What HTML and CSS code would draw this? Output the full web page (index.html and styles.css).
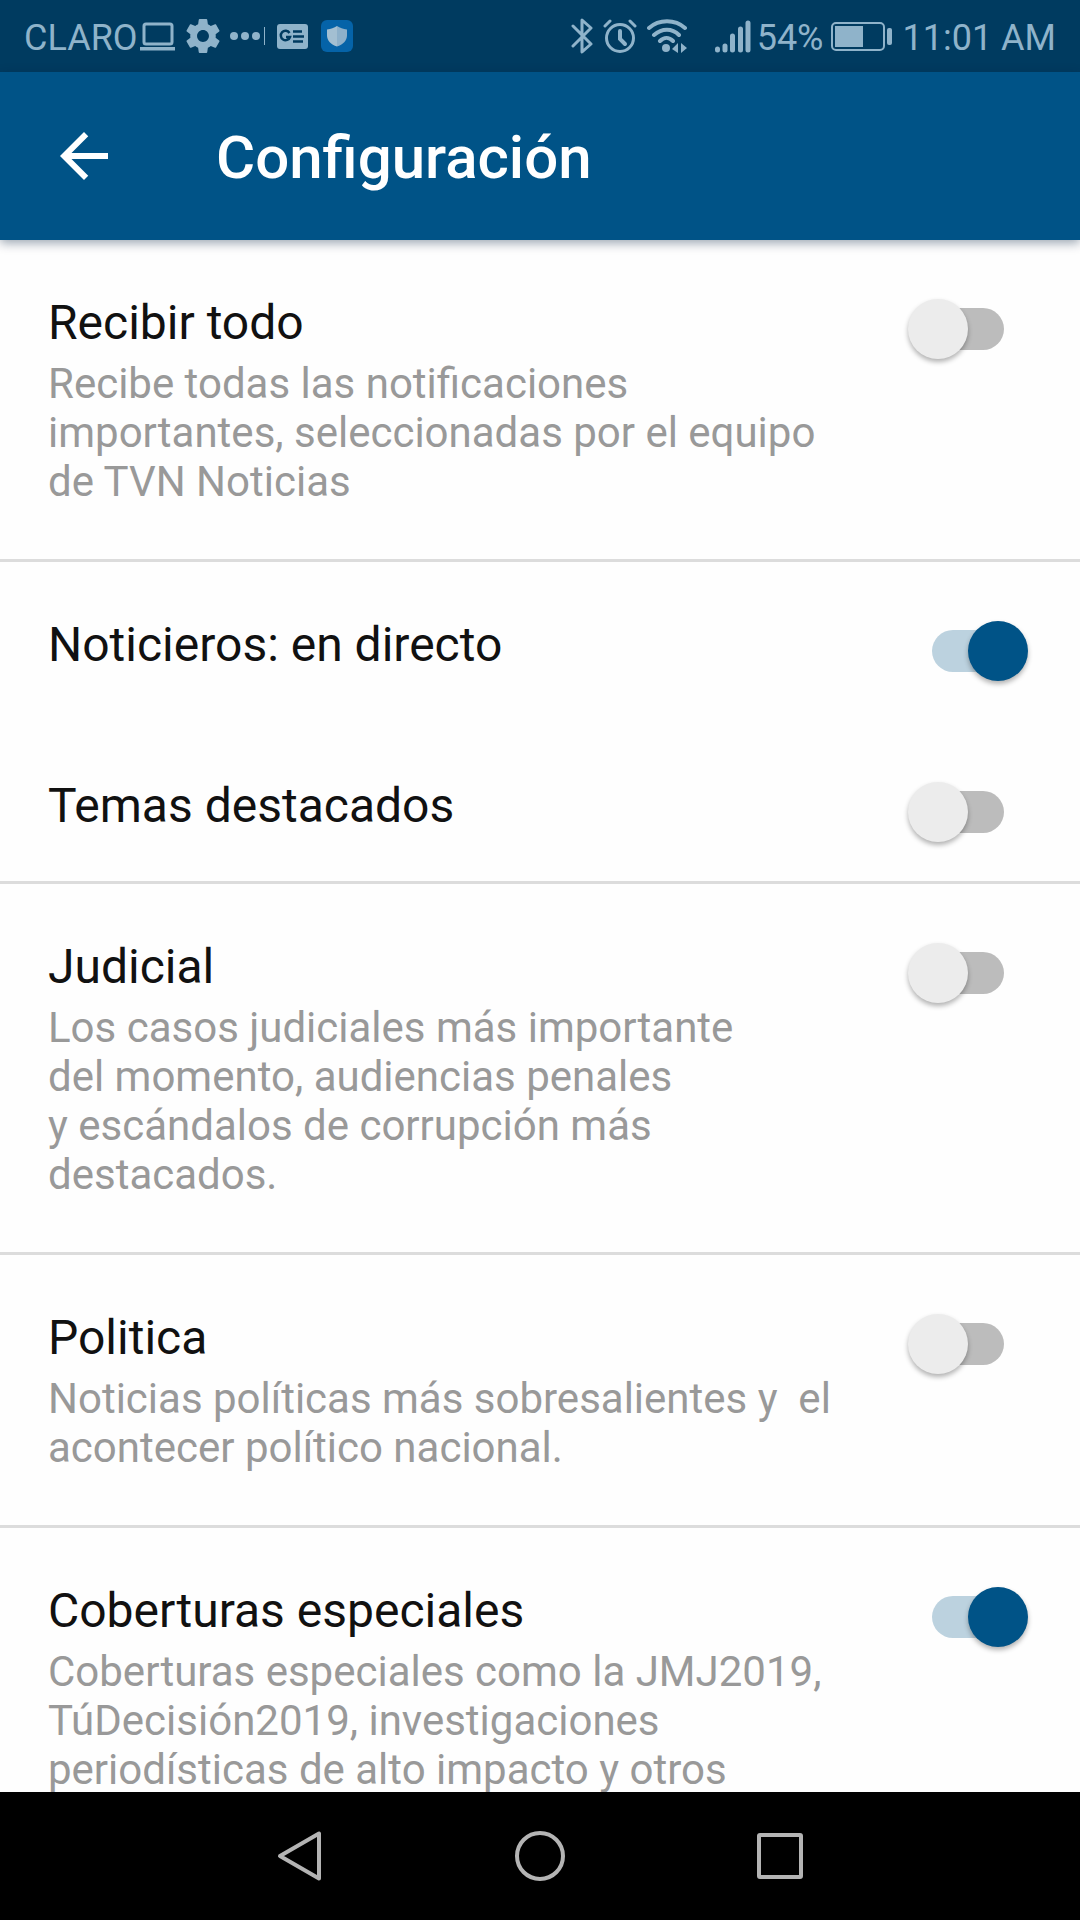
FILE: index.html
```html
<!DOCTYPE html>
<html lang="es">
<head>
<meta charset="utf-8">
<meta name="viewport" content="width=device-width, initial-scale=1">
<title>Configuración</title>
<link rel="stylesheet" href="styles.css">
</head>
<body>
<div class="screen">
  <div class="status">
    <div class="status-group">
      <span class="label carrier">CLARO</span>
      <svg width="36" height="34" viewBox="0 0 36 34" aria-hidden="true">
        <rect x="4" y="5" width="28" height="20" rx="2" fill="none" stroke="currentColor" stroke-width="3"/>
        <path d="M0 28h35v3.500H0z" fill="currentColor"/>
      </svg>
      <svg width="34" height="34" viewBox="2 2 20 20" aria-hidden="true">
        <path fill="currentColor" d="M19.430 12.980c.040-.320.070-.640.070-.980s-.030-.660-.070-.980l2.110-1.650c.190-.150.240-.420.120-.640l-2-3.460c-.120-.220-.390-.300-.610-.220l-2.490 1c-.520-.400-1.080-.730-1.690-.980l-.380-2.650C14.460 2.180 14.250 2 14 2h-4c-.250 0-.460.180-.490.420l-.380 2.650c-.610.250-1.170.590-1.690.980l-2.490-1c-.230-.090-.490 0-.610.220l-2 3.460c-.130.220-.070.490.120.640l2.110 1.650c-.040.320-.070.650-.070.980s.030.660.070.980l-2.110 1.650c-.190.150-.240.420-.120.640l2 3.460c.120.220.390.300.610.220l2.490-1c.520.400 1.080.730 1.690.980l.380 2.650c.030.240.240.420.490.420h4c.250 0 .460-.180.490-.420l.380-2.650c.610-.250 1.170-.590 1.690-.980l2.490 1c.230.090.490 0 .610-.220l2-3.460c.120-.220.070-.490-.120-.640l-2.110-1.650zM12 15.500c-1.930 0-3.500-1.570-3.500-3.500s1.570-3.500 3.500-3.500 3.500 1.570 3.500 3.500-1.570 3.500-3.500 3.500z"/>
      </svg>
      <svg width="36" height="34" viewBox="0 0 36 34" aria-hidden="true" fill="currentColor">
        <circle cx="4" cy="17" r="4"/><circle cx="15" cy="17" r="4"/><circle cx="26" cy="17" r="4"/>
        <rect x="34" y="8" width="1" height="18"/>
      </svg>
      <svg width="34" height="34" viewBox="0 0 34 34" aria-hidden="true">
        <rect x="1" y="5" width="31" height="25" rx="3" fill="currentColor"/>
        <g fill="none" stroke="#003b60" stroke-width="2.500">
          <path d="M13.500 14A4.700 4.700 0 1 0 14 18H10"/>
          <path d="M17 12.500h9M17 17.500h11M17 22.500h10"/>
        </g>
      </svg>
      <svg width="34" height="34" viewBox="0 0 34 34" aria-hidden="true">
        <rect x="1" y="1" width="32" height="32" rx="6" fill="#0563a8"/>
        <path d="M17 7c3 2 6 3 10 3.500v6c0 5-4 9-10 11z" fill="#8db0ca"/>
        <path d="M17 7c-3 2-6 3-10 3.500v6c0 5 4 9 10 11z" fill="#a3bfd2"/>
      </svg>
    </div>
    <div class="status-group">
      <svg width="22" height="36" viewBox="0 0 22 36" aria-hidden="true">
        <path d="M2 8l18 18-9 8V2l9 8L2 28" fill="none" stroke="currentColor" stroke-width="3" stroke-linejoin="round" stroke-linecap="round"/>
      </svg>
      <svg width="34" height="36" viewBox="0 0 34 36" aria-hidden="true" fill="none" stroke="currentColor" stroke-linecap="round">
        <circle cx="17" cy="20" r="13.500" stroke-width="3"/>
        <path d="M17 13v8l5 5" stroke-width="4"/>
        <path d="M2 8l5-5M32 8l-5-5" stroke-width="3"/>
      </svg>
      <svg width="40" height="36" viewBox="0 0 40 36" aria-hidden="true" fill="none" stroke="currentColor" stroke-linecap="round">
        <path d="M2 10c10-9 26-9 36 0M7 17c8-7 18-7 25 0M13 23c4-4 9-4 13 0" stroke-width="4"/>
        <circle cx="19" cy="30" r="4" fill="currentColor" stroke="none"/>
        <path d="M31 25v10l-6-4zM34 25l6 5-6 5z" fill="currentColor" stroke="none"/>
      </svg>
      <svg class="signal" width="36" height="36" viewBox="0 0 36 36" aria-hidden="true" fill="none" stroke="currentColor" stroke-width="5" stroke-linecap="round">
        <path d="M2.500 31v1M10 28v4M17.500 18v14M25.500 11v21M33 5v27"/>
      </svg>
      <span class="label percent">54%</span>
      <svg width="62" height="36" viewBox="0 0 62 36" aria-hidden="true">
        <rect x="1" y="5" width="52" height="27" rx="4" fill="none" stroke="currentColor" stroke-width="2"/>
        <rect x="4" y="8" width="28" height="21" fill="currentColor"/>
        <rect x="56" y="10" width="5" height="17" rx="2" fill="currentColor"/>
      </svg>
      <span class="label">11:01 AM</span>
    </div>
  </div>

  <header class="appbar">
    <button class="back" type="button" aria-label="Volver">
      <svg width="48" height="48" viewBox="4 4 16 16" aria-hidden="true"><path fill="currentColor" d="M20 11H7.830l5.590-5.590L12 4l-8 8 8 8 1.410-1.410L7.830 13H20v-2z"/></svg>
    </button>
    <h1 class="title">Configuración</h1>
  </header>

  <main class="list">
    <div class="row divided">
      <div class="text">
        <label class="name" for="todo">Recibir todo</label>
        <p class="desc">Recibe todas las notificaciones importantes, seleccionadas por el equipo de TVN Noticias</p>
      </div>
      <input class="switch" type="checkbox" id="todo">
    </div>
    <div class="row">
      <div class="text"><label class="name" for="directo">Noticieros: en directo</label></div>
      <input class="switch" type="checkbox" id="directo" checked>
    </div>
    <div class="row divided">
      <div class="text"><label class="name" for="temas">Temas destacados</label></div>
      <input class="switch" type="checkbox" id="temas">
    </div>
    <div class="row divided">
      <div class="text">
        <label class="name" for="judicial">Judicial</label>
        <p class="desc">Los casos judiciales más importante<br>del momento, audiencias penales<br>y escándalos de corrupción más destacados.</p>
      </div>
      <input class="switch" type="checkbox" id="judicial">
    </div>
    <div class="row divided">
      <div class="text">
        <label class="name" for="politica">Politica</label>
        <p class="desc">Noticias políticas más sobresalientes y&nbsp; el acontecer político nacional.</p>
      </div>
      <input class="switch" type="checkbox" id="politica">
    </div>
    <div class="row">
      <div class="text">
        <label class="name" for="coberturas">Coberturas especiales</label>
        <p class="desc">Coberturas especiales como la JMJ2019, TúDecisión2019, investigaciones periodísticas de alto impacto y otros</p>
      </div>
      <input class="switch" type="checkbox" id="coberturas" checked>
    </div>
  </main>

  <nav class="navbar">
    <button class="key" type="button" aria-label="Atrás">
      <svg width="52" height="52" viewBox="0 0 52 52" aria-hidden="true"><path d="M45 3.500v45L6 26z"/></svg>
    </button>
    <button class="key" type="button" aria-label="Inicio">
      <svg width="52" height="52" viewBox="0 0 52 52" aria-hidden="true"><circle cx="26" cy="26" r="23"/></svg>
    </button>
    <button class="key" type="button" aria-label="Recientes">
      <svg width="52" height="52" viewBox="0 0 52 52" aria-hidden="true"><rect x="5" y="5" width="42" height="42" rx="1"/></svg>
    </button>
  </nav>
</div>
</body>
</html>
```
FILE: styles.css
```css
* {
  box-sizing: border-box;
}

body {
  margin: 0;
  font-family: Roboto, "Noto Sans", sans-serif;
  background: #fefefe;
  color: #111;
}

button {
  border: 0;
  padding: 0;
  background: none;
  color: inherit;
}

svg {
  display: block;
  flex: none;
}

.screen {
  display: flex;
  flex-direction: column;
  height: 100vh;
}

/* System status bar */
.status {
  display: flex;
  flex: none;
  justify-content: space-between;
  align-items: center;
  height: 72px;
  padding: 0 24px;
  background: #003b60;
  color: #8fb3ca;
  font-size: 36px;
  line-height: 42px;
  white-space: nowrap;
}

.status-group {
  display: flex;
  align-items: center;
  gap: 10px;
}

.label {
  padding-top: 3px;
}

.carrier {
  margin-right: -8px;
}

.signal {
  margin-left: 18px;
}

.percent {
  margin: 0 -3px 0 -4px;
}

/* App bar */
.appbar {
  display: flex;
  flex: none;
  align-items: center;
  height: 168px;
  padding: 0 60px;
  gap: 108px;
  background: #005387;
  color: #fff;
  box-shadow: 0 3px 10px rgba(0, 30, 60, 0.4);
  z-index: 1;
}

.title {
  margin: 0;
  padding-top: 4px;
  font-size: 60px;
  font-weight: 500;
  line-height: 72px;
}

/* Settings list */
.list {
  flex: 1;
  min-height: 0;
  overflow-y: auto;
  scrollbar-width: none;
}

.row {
  display: flex;
  justify-content: space-between;
  align-items: flex-start;
  min-height: 161px;
  padding: 55px 52px 0 48px;
  gap: 16px;
}

.divided {
  border-bottom: 3px solid #dcdcdc;
}

.text {
  flex: 1;
  max-width: 800px;
}

.name {
  display: block;
  font-size: 48px;
  line-height: 56px;
}

.desc {
  margin: 8px 0 0;
  padding-bottom: 53px;
  font-size: 42px;
  line-height: 49px;
  color: #999;
}

.switch {
  appearance: none;
  display: grid;
  flex: none;
  align-items: center;
  width: 120px;
  height: 60px;
  margin: 4px 0 0;
}

.switch::before,
.switch::after {
  content: "";
  grid-area: 1 / 1;
}

.switch::before {
  justify-self: center;
  width: 72px;
  height: 42px;
  border-radius: 21px;
  background: #bcbcbc;
}

.switch::after {
  width: 60px;
  height: 60px;
  border-radius: 50%;
  background: #ececec;
  box-shadow: 0 3px 5px rgba(0, 0, 0, 0.3);
}

.switch:checked::before {
  background: #bcd2df;
}

.switch:checked::after {
  justify-self: end;
  background: #005387;
}

/* System navigation bar */
.navbar {
  display: flex;
  flex: none;
  justify-content: center;
  align-items: center;
  height: 128px;
  background: #000;
  color: #b4b4b4;
}

.key {
  display: grid;
  place-items: center;
  width: 240px;
  height: 100%;
}

.key svg {
  fill: none;
  stroke: currentColor;
  stroke-width: 4;
  stroke-linejoin: round;
}
```
